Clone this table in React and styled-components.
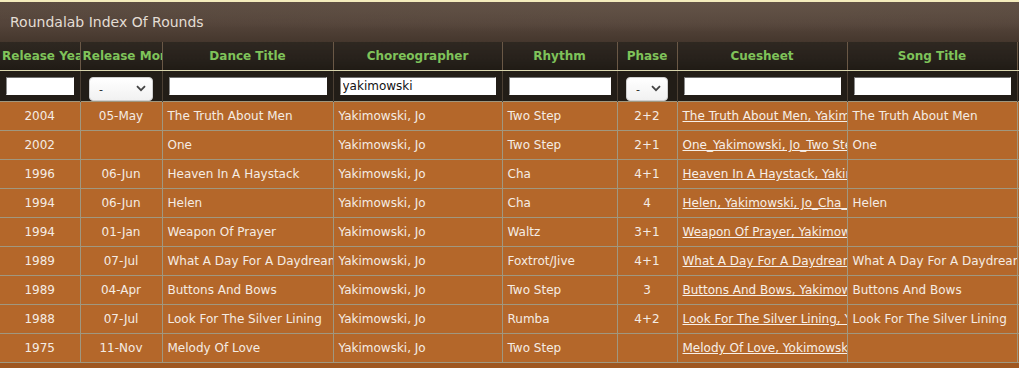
import React from 'react';
import styled, { createGlobalStyle } from 'styled-components';

const GlobalStyle = createGlobalStyle`
  html, body {
    margin: 0;
    padding: 0;
    background: #9f5720;
    font-family: 'DejaVu Sans', Verdana, sans-serif;
  }
`;

const Page = styled.div`
  width: 1019px;
  height: 368px;
  overflow: hidden;
  border-top: 2px solid #f4ecbc;
  box-sizing: border-box;
  background: #9f5720;
`;

const TitleBar = styled.div`
  height: 40px;
  display: flex;
  align-items: center;
  padding-left: 10px;
  color: #e4ddd4;
  font-size: 14px;
  background:
    radial-gradient(ellipse 900px 30px at 70% 0%, rgba(100, 84, 72, 0.9), rgba(100, 84, 72, 0) 100%),
    linear-gradient(to bottom, #594a3f 0%, #54443a 55%, #45372d 100%);
`;

const Table = styled.table`
  border-collapse: collapse;
  table-layout: fixed;
  width: 1117px;
  font-size: 12px;
`;

const HeadCell = styled.th`
  height: 28px;
  padding: 0 2px;
  color: #7fc35a;
  font-weight: bold;
  font-size: 12px;
  text-align: center;
  white-space: nowrap;
  overflow: hidden;
  border-left: 1px solid #6a5846;
  border-right: 1px solid #6a5846;
  border-bottom: 1px solid #d9d6ae;
  background: linear-gradient(to bottom, #2f2821 0%, #27211b 60%, #201b15 100%);
  &:first-child {
    border-left: none;
  }
`;

const FilterCell = styled.td`
  height: 28px;
  padding: 0 6px;
  background: #221d17;
  border-left: 1px solid #4c4034;
  border-right: 1px solid #4c4034;
  vertical-align: middle;
  text-align: ${(p) => (p.center ? 'center' : 'left')};
  overflow: hidden;
  &:first-child {
    border-left: none;
  }
`;

const TextInput = styled.input`
  display: block;
  box-sizing: border-box;
  width: 100%;
  height: 18px;
  margin: 0;
  padding: 0 2px;
  border: 1px solid #fff;
  border-top-color: #707070;
  border-left-color: #8a8a8a;
  background: #fff;
  font-family: 'DejaVu Sans', Verdana, sans-serif;
  font-size: 12px;
  color: #111;
  outline: none;
`;

const SelectWrap = styled.div`
  position: relative;
  display: inline-block;
  width: ${(p) => p.w}px;
  height: 24px;
  margin-top: 6px;
  vertical-align: top;
`;

const Select = styled.select`
  appearance: none;
  width: 100%;
  height: 100%;
  box-sizing: border-box;
  margin: 0;
  padding: 0 0 0 9px;
  border: 1px solid #cfcfcf;
  border-radius: 4px;
  background: linear-gradient(to bottom, #ffffff, #f1f1f1);
  font-family: 'DejaVu Sans', Verdana, sans-serif;
  font-size: 11px;
  color: #222;
  outline: none;
`;

const Chevron = styled.svg`
  position: absolute;
  right: 7px;
  top: 8px;
  pointer-events: none;
`;

const Row = styled.tr``;

const Cell = styled.td`
  height: 28px;
  padding: 0 5px;
  background: #b4672a;
  color: #f4ece4;
  border: 1px solid #a0977f;
  white-space: nowrap;
  overflow: hidden;
  text-align: ${(p) => (p.center ? 'center' : 'left')};
  &:first-child {
    border-left: none;
  }
`;

const CueLink = styled.a`
  color: #f7efe8;
  text-decoration: underline;
`;

const columns = [
  { title: 'Release Year', width: 80, center: true },
  { title: 'Release Month', width: 82, center: true },
  { title: 'Dance Title', width: 171 },
  { title: 'Choreographer', width: 169 },
  { title: 'Rhythm', width: 115 },
  { title: 'Phase', width: 60, center: true },
  { title: 'Cuesheet', width: 170 },
  { title: 'Song Title', width: 170 },
  { title: 'Notes', width: 100 },
];

const rounds = [
  ['2004', '05-May', 'The Truth About Men', 'Yakimowski, Jo', 'Two Step', '2+2', 'The Truth About Men, Yakimowski, Jo_Two Step', 'The Truth About Men'],
  ['2002', '', 'One', 'Yakimowski, Jo', 'Two Step', '2+1', 'One_Yakimowski, Jo_Two Step', 'One'],
  ['1996', '06-Jun', 'Heaven In A Haystack', 'Yakimowski, Jo', 'Cha', '4+1', 'Heaven In A Haystack, Yakimowski, Jo', ''],
  ['1994', '06-Jun', 'Helen', 'Yakimowski, Jo', 'Cha', '4', 'Helen, Yakimowski, Jo_Cha_Phase 4', 'Helen'],
  ['1994', '01-Jan', 'Weapon Of Prayer', 'Yakimowski, Jo', 'Waltz', '3+1', 'Weapon Of Prayer, Yakimowski, Jo', ''],
  ['1989', '07-Jul', 'What A Day For A Daydream', 'Yakimowski, Jo', 'Foxtrot/Jive', '4+1', 'What A Day For A Daydream, Yakimowski', 'What A Day For A Daydream'],
  ['1989', '04-Apr', 'Buttons And Bows', 'Yakimowski, Jo', 'Two Step', '3', 'Buttons And Bows, Yakimowski, Jo', 'Buttons And Bows'],
  ['1988', '07-Jul', 'Look For The Silver Lining', 'Yakimowski, Jo', 'Rumba', '4+2', 'Look For The Silver Lining, Yakimowski', 'Look For The Silver Lining'],
  ['1975', '11-Nov', 'Melody Of Love', 'Yakimowski, Jo', 'Two Step', '', 'Melody Of Love, Yokimowski, Jo', ''],
];

const DropDown = ({ w }) => (
  <SelectWrap w={w}>
    <Select defaultValue="-">
      <option>-</option>
    </Select>
    <Chevron width="10" height="7" viewBox="0 0 10 7">
      <path d="M1 1.2 L5 5.2 L9 1.2" fill="none" stroke="#444" strokeWidth="1.8" />
    </Chevron>
  </SelectWrap>
);

const App = () => {
  return (
    <Page>
      <GlobalStyle />
      <TitleBar>Roundalab Index Of Rounds</TitleBar>
      <Table>
        <colgroup>
          {columns.map((c) => (
            <col key={c.title} style={{ width: c.width }} />
          ))}
        </colgroup>
        <thead>
          <tr>
            {columns.map((c) => (
              <HeadCell key={c.title}>{c.title}</HeadCell>
            ))}
          </tr>
          <tr>
            <FilterCell><TextInput /></FilterCell>
            <FilterCell center><DropDown w={64} /></FilterCell>
            <FilterCell><TextInput /></FilterCell>
            <FilterCell><TextInput defaultValue="yakimowski" /></FilterCell>
            <FilterCell><TextInput /></FilterCell>
            <FilterCell center><DropDown w={42} /></FilterCell>
            <FilterCell><TextInput /></FilterCell>
            <FilterCell><TextInput /></FilterCell>
            <FilterCell><TextInput /></FilterCell>
          </tr>
        </thead>
        <tbody>
          {rounds.map((r, i) => (
            <Row key={i}>
              <Cell center>{r[0]}</Cell>
              <Cell center>{r[1]}</Cell>
              <Cell>{r[2]}</Cell>
              <Cell>{r[3]}</Cell>
              <Cell>{r[4]}</Cell>
              <Cell center>{r[5]}</Cell>
              <Cell>
                <CueLink href="#">{r[6]}</CueLink>
              </Cell>
              <Cell>{r[7]}</Cell>
              <Cell />
            </Row>
          ))}
        </tbody>
      </Table>
    </Page>
  );
};

export default App;
